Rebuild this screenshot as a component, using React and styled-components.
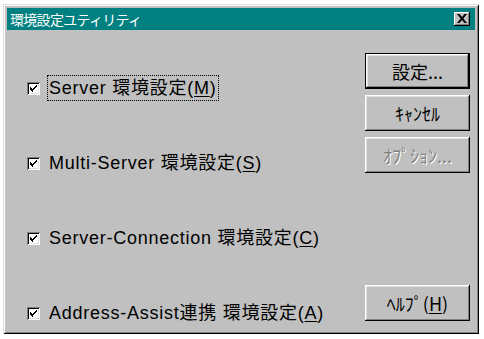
import React from "react";
import styled, { createGlobalStyle, css } from "styled-components";

const GlobalStyle = createGlobalStyle`
  html, body {
    margin: 0;
    padding: 0;
    background: #ffffff;
  }
  * {
    box-sizing: border-box;
  }
`;

const FONT = `"Liberation Sans", "Noto Sans CJK JP", sans-serif`;

const Window = styled.div`
  margin: 4px 0 0 3px;
  width: 476px;
  height: 330px;
  background: #c0c0c0;
  padding: 4px;
  box-shadow: inset 1px 1px 0 #dfdfdf, inset -1px -1px 0 #000000,
    inset 2px 2px 0 #ffffff, inset -2px -2px 0 #808080;
  display: flex;
  flex-direction: column;
  font-family: ${FONT};
`;

const TitleBar = styled.div`
  height: 22px;
  background: #008080;
  display: flex;
  align-items: center;
  padding: 0 5px 0 3px;
`;

const Title = styled.span`
  flex: 1;
  color: #ffffff;
  font-family: "Noto Sans CJK JP", sans-serif;
  font-size: 14px;
  letter-spacing: -0.7px;
  line-height: 22px;
`;

const CloseButton = styled.div`
  width: 16px;
  height: 14px;
  background: #c0c0c0;
  box-shadow: inset -1px -1px 0 #000000, inset 1px 1px 0 #ffffff,
    inset -2px -2px 0 #808080;
  display: flex;
  align-items: center;
  justify-content: center;
  padding: 0 1px 1px 0;
`;

const Body = styled.div`
  flex: 1;
  display: flex;
`;

const Options = styled.div`
  flex: 1;
  display: flex;
  flex-direction: column;
  justify-content: space-between;
  padding: 45px 0 4px 20px;
`;

const Row = styled.label`
  height: 26px;
  display: flex;
  align-items: center;
`;

const Box = styled.span`
  width: 13px;
  height: 13px;
  background: #ffffff;
  box-shadow: inset 1px 1px 0 #808080, inset -1px -1px 0 #ffffff,
    inset 2px 2px 0 #000000, inset -2px -2px 0 #dfdfdf;
  display: flex;
  align-items: center;
  justify-content: center;
  margin-right: 7px;
`;

const Label = styled.span`
  font-size: 18px;
  letter-spacing: 0.75px;
  color: #000000;
  padding: 0 1px;
  line-height: 24px;
  white-space: nowrap;
  border: 1px dotted ${(p) => (p.$focused ? "#000000" : "transparent")};
  u {
    text-underline-offset: 2px;
  }
`;

const Buttons = styled.div`
  width: 105px;
  margin-right: 5px;
  display: flex;
  flex-direction: column;
  gap: 6px;
  padding: 23px 0 9px;
`;

const Button = styled.div`
  height: 36px;
  display: flex;
  align-items: center;
  justify-content: center;
  font-family: "Noto Sans CJK JP", sans-serif;
  font-size: 18px;
  color: #000000;
  background: #c0c0c0;
  box-shadow: inset -1px -1px 0 #000000, inset 1px 1px 0 #ffffff,
    inset -2px -2px 0 #808080, inset 2px 2px 0 #dfdfdf;
  ${(p) =>
    p.$default &&
    css`
      box-shadow: inset 0 0 0 1px #000000, inset -2px -2px 0 #000000,
        inset 2px 2px 0 #ffffff, inset -3px -3px 0 #808080,
        inset 3px 3px 0 #dfdfdf;
    `}
  ${(p) =>
    p.$disabled &&
    css`
      color: #808080;
      text-shadow: 1px 1px 0 #ffffff;
    `}
  ${(p) =>
    p.$bottom &&
    css`
      margin-top: auto;
    `}
  u {
    text-underline-offset: 2px;
  }
`;

const Check = () => (
  <svg width="7" height="7" viewBox="0 0 7 7" shapeRendering="crispEdges">
    <path
      d="M6 0h1v1h-1zM5 1h2v1h-2zM4 2h2v1h-2zM0 2h1v1h-1zM0 3h2v1h-2zM3 3h2v1h-2zM1 4h3v1h-3zM1 5h2v1h-2zM2 6h1v1h-1zM0 4h1v1h-1zM6 1h1v1h-1z"
      fill="#000"
    />
  </svg>
);

const CloseGlyph = () => (
  <svg width="10" height="9" viewBox="0 0 10 9">
    <path
      d="M0 0h2.5L5 3 7.5 0H10L6.3 4.5 10 9H7.5L5 6 2.5 9H0l3.7-4.5z"
      fill="#000"
    />
  </svg>
);

const items = [
  { text: "Server 環境設定(", key: "M", focused: true },
  { text: "Multi-Server 環境設定(", key: "S" },
  { text: "Server-Connection 環境設定(", key: "C" },
  { text: "Address-Assist連携 環境設定(", key: "A" },
];

export default function App() {
  return (
    <>
      <GlobalStyle />
      <Window>
        <TitleBar>
          <Title>環境設定ユティリティ</Title>
          <CloseButton>
            <CloseGlyph />
          </CloseButton>
        </TitleBar>
        <Body>
          <Options>
            {items.map((it) => (
              <Row key={it.key}>
                <Box>
                  <Check />
                </Box>
                <Label $focused={it.focused}>
                  {it.text}
                  <u>{it.key}</u>)
                </Label>
              </Row>
            ))}
          </Options>
          <Buttons>
            <Button $default>設定...</Button>
            <Button>ｷｬﾝｾﾙ</Button>
            <Button $disabled>ｵﾌﾟｼｮﾝ...</Button>
            <Button $bottom>
              ﾍﾙﾌﾟ(<u>H</u>)
            </Button>
          </Buttons>
        </Body>
      </Window>
    </>
  );
}
